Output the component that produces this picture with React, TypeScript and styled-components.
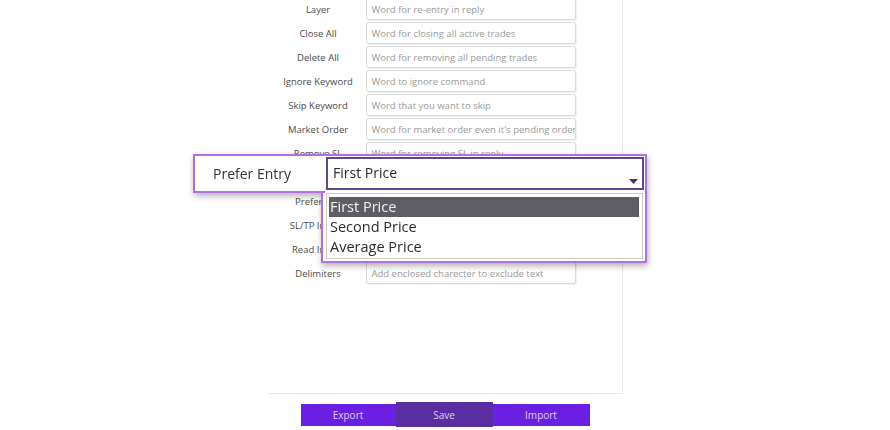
import styled, { createGlobalStyle } from 'styled-components';

const GlobalStyle = createGlobalStyle`
  body {
    margin: 0;
    background: #fff;
    font-family: "Open Sans", "Noto Sans", sans-serif;
  }
`;

const Page = styled.div`
  position: relative;
  width: 890px;
  height: 430px;
  overflow: hidden;
  display: flex;
  flex-direction: column;
  align-items: center;
`;

const Panel = styled.div`
  width: 355px;
  height: 398px;
  margin-top: -4px;
  padding-top: 1px;
  box-sizing: border-box;
  border-right: 1px solid #e4e4e4;
  border-bottom: 1px solid #e4e4e4;
`;

const Row = styled.div`
  display: grid;
  grid-template-columns: 95px 210px;
  align-items: center;
  height: 24px;
  padding-left: 3px;
`;

const Label = styled.div`
  text-align: center;
  font-size: 9.5px;
  color: #4a4a4a;
  white-space: nowrap;
  overflow: hidden;
`;

const Field = styled.div`
  height: 22px;
  box-sizing: border-box;
  border: 1px solid #dadada;
  border-radius: 2px;
  box-shadow: 1px 1px 1px rgba(0, 0, 0, 0.06);
  padding: 0 5px;
  display: flex;
  align-items: center;
  font-size: 9.5px;
  color: #9a9a9a;
  white-space: nowrap;
  overflow: hidden;
`;

const ButtonBar = styled.div`
  display: flex;
  align-items: center;
  margin-top: 8px;
`;

const Button = styled.div<{ $active?: boolean; $w: number }>`
  width: ${(p) => p.$w}px;
  height: ${(p) => (p.$active ? 25 : 22)}px;
  background: ${(p) => (p.$active ? '#5a2ea0' : '#6b1fe2')};
  color: #ddd0f5;
  font-size: 10px;
  display: flex;
  align-items: center;
  justify-content: center;
`;

const Callout = styled.div`
  position: absolute;
  left: 193px;
  top: 154px;
  display: flex;
  align-items: flex-start;
  filter: drop-shadow(1px 3px 3px rgba(0, 0, 0, 0.3));
`;

const CalloutLabel = styled.div`
  position: relative;
  z-index: 1;
  width: 132px;
  height: 39px;
  box-sizing: border-box;
  margin-right: -4px;
  padding-left: 18px;
  border: 2px solid #b26fe0;
  border-right: none;
  background: #fff;
  display: flex;
  align-items: center;
  font-size: 14px;
  color: #333;
`;

const CalloutColumn = styled.div`
  width: 326px;
  height: 109px;
  box-sizing: border-box;
  border: 2px solid #b26fe0;
  background: #fff;
  padding: 1px 0 0 3px;
`;

const SelectBox = styled.div`
  position: relative;
  width: 318px;
  height: 33px;
  box-sizing: border-box;
  border: 2px solid #5e4690;
  padding: 0 0 2px 5px;
  display: flex;
  align-items: center;
  font-size: 14px;
  color: #2a2a2a;
`;

const Arrow = styled.svg`
  position: absolute;
  right: 4px;
  bottom: 4px;
`;

const List = styled.div`
  width: 317px;
  height: 66px;
  box-sizing: border-box;
  margin-top: 3px;
  border: 1px solid #c9c9c9;
  padding: 3px 3px 0 2px;
`;

const Option = styled.div<{ $selected?: boolean }>`
  height: 20px;
  line-height: 19px;
  padding-left: 1px;
  font-size: 14.5px;
  background: ${(p) => (p.$selected ? '#5f5d63' : 'transparent')};
  color: ${(p) => (p.$selected ? '#f2f2f2' : '#2a2a2a')};
`;

const rows = [
  ['Layer', 'Word for re-entry in reply'],
  ['Close All', 'Word for closing all active trades'],
  ['Delete All', 'Word for removing all pending trades'],
  ['Ignore Keyword', 'Word to ignore command'],
  ['Skip Keyword', 'Word that you want to skip'],
  ['Market Order', "Word for market order even it's pending order"],
  ['Remove SL', 'Word for removing SL in reply'],
  ['Prefer Entry', 'First Price'],
  ['Prefer Exit', 'First Target'],
  ['SL/TP In Pips', 'Read SL and TP as pips'],
  ['Read Image', 'Read text from images'],
  ['Delimiters', 'Add enclosed charecter to exclude text'],
];

const App = () => {
  return (
    <>
      <GlobalStyle />
      <Page>
        <Panel>
          {rows.map(([label, hint]) => (
            <Row key={label}>
              <Label>{label}</Label>
              <Field>{hint}</Field>
            </Row>
          ))}
        </Panel>
        <ButtonBar>
          <Button $w={95}>Export</Button>
          <Button $w={97} $active>Save</Button>
          <Button $w={97}>Import</Button>
        </ButtonBar>

        <Callout>
          <CalloutLabel>Prefer Entry</CalloutLabel>
          <CalloutColumn>
            <SelectBox>
              First Price
              <Arrow width="9" height="5" viewBox="0 0 9 5">
                <polygon points="0,0 9,0 4.5,5" fill="#4b2d7e" />
              </Arrow>
            </SelectBox>
            <List>
              <Option $selected>First Price</Option>
              <Option>Second Price</Option>
              <Option>Average Price</Option>
            </List>
          </CalloutColumn>
        </Callout>
      </Page>
    </>
  );
};

export default App;
